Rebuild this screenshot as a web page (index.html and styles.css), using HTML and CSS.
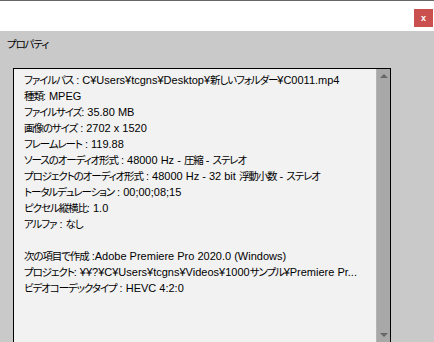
FILE: index.html
```html
<!DOCTYPE html>
<html lang="ja">
<head>
    <meta charset="UTF-8">
    <title>プロパティ</title>
    <link rel="stylesheet" href="styles.css">
</head>
<body>
    <div class="topbar">
        <button class="close">x</button>
    </div>
    <div class="main">
        <div class="title"><span class="jp">プロパティ</span></div>
        <div class="panel">
            <div class="info">
                <div><span class="jp">ファイルパス</span> : C¥Users¥tcgns¥Desktop¥<span class="jp">新しいフォルダー</span>¥C0011.mp4</div>
                <div><span class="jp">種類</span>: MPEG</div>
                <div><span class="jp">ファイルサイズ</span>: 35.80 MB</div>
                <div><span class="jp">画像のサイズ</span> : 2702 x 1520</div>
                <div><span class="jp">フレームレート</span> : 119.88</div>
                <div><span class="jp">ソースのオーディオ形式</span> : 48000 Hz - <span class="jp">圧縮</span> - <span class="jp">ステレオ</span></div>
                <div><span class="jp">プロジェクトのオーディオ形式</span> : 48000 Hz - 32 bit <span class="jp">浮動小数</span> - <span class="jp">ステレオ</span></div>
                <div><span class="jp">トータルデュレーション</span> : 00;00;08;15</div>
                <div><span class="jp">ピクセル縦横比</span>: 1.0</div>
                <div><span class="jp">アルファ</span> : <span class="jp">なし</span></div>
                <div class="blank"></div>
                <div><span class="jp">次の項目で作成</span> :Adobe Premiere Pro 2020.0 (Windows)</div>
                <div><span class="jp">プロジェクト</span>: ¥¥?¥C¥Users¥tcgns¥Videos¥1000<span class="jp">サンプル</span>¥Premiere Pr...</div>
                <div><span class="jp">ビデオコーデックタイプ</span> : HEVC 4:2:0</div>
            </div>
            <div class="scrollbar">
                <span class="arrow up"></span>
                <span class="arrow down"></span>
            </div>
        </div>
    </div>
</body>
</html>
```

FILE: styles.css
```css
html, body {
    margin: 0;
    height: 100%;
    overflow: hidden;
}
body {
    font-family: "Liberation Sans", "Noto Sans CJK JP", sans-serif;
    font-size: 11px;
    color: #000;
    background-color: #c9c9c9;
    display: flex;
    flex-direction: column;
}
.jp {
    font-family: "Noto Sans CJK JP", sans-serif;
    font-feature-settings: "palt";
    font-size: 10.5px;
    letter-spacing: -1.1px;
}
.topbar {
    height: 30px;
    background-color: #fff;
    border-top: 1px solid #666;
    display: flex;
    justify-content: flex-end;
    align-items: flex-start;
}
.close {
    margin-top: 8px;
    margin-right: 1px;
    width: 19px;
    height: 18px;
    padding: 0;
    border: none;
    background-color: #c9504e;
    color: #fff;
    font-family: "Liberation Sans", sans-serif;
    font-weight: bold;
    font-size: 9px;
    line-height: 16px;
}
.main {
    flex: 1;
    display: flex;
    flex-direction: column;
}
.title {
    padding: 5px 0 0 7px;
    height: 32px;
    line-height: 16px;
}
.panel {
    margin-left: 13px;
    width: 376px;
    flex: 1;
    display: flex;
    border-top: 1px solid #000;
    border-left: 1px solid #000;
    border-right: 1px solid #000;
    background-color: #f2f2f2;
}
.info {
    flex: 1;
    padding: 3px 0 0 10px;
    line-height: 16px;
    white-space: nowrap;
    overflow: hidden;
}
.blank {
    height: 16px;
}
.scrollbar {
    width: 13px;
    background-color: #a8a8a8;
    border-left: 1px solid #b4b4b4;
    display: flex;
    flex-direction: column;
    justify-content: space-between;
    align-items: center;
    padding: 5px 0 5px;
}
.arrow {
    width: 0;
    height: 0;
    border-left: 4px solid transparent;
    border-right: 4px solid transparent;
}
.arrow.up {
    border-bottom: 4px solid #666;
}
.arrow.down {
    border-top: 4px solid #666;
}
```
